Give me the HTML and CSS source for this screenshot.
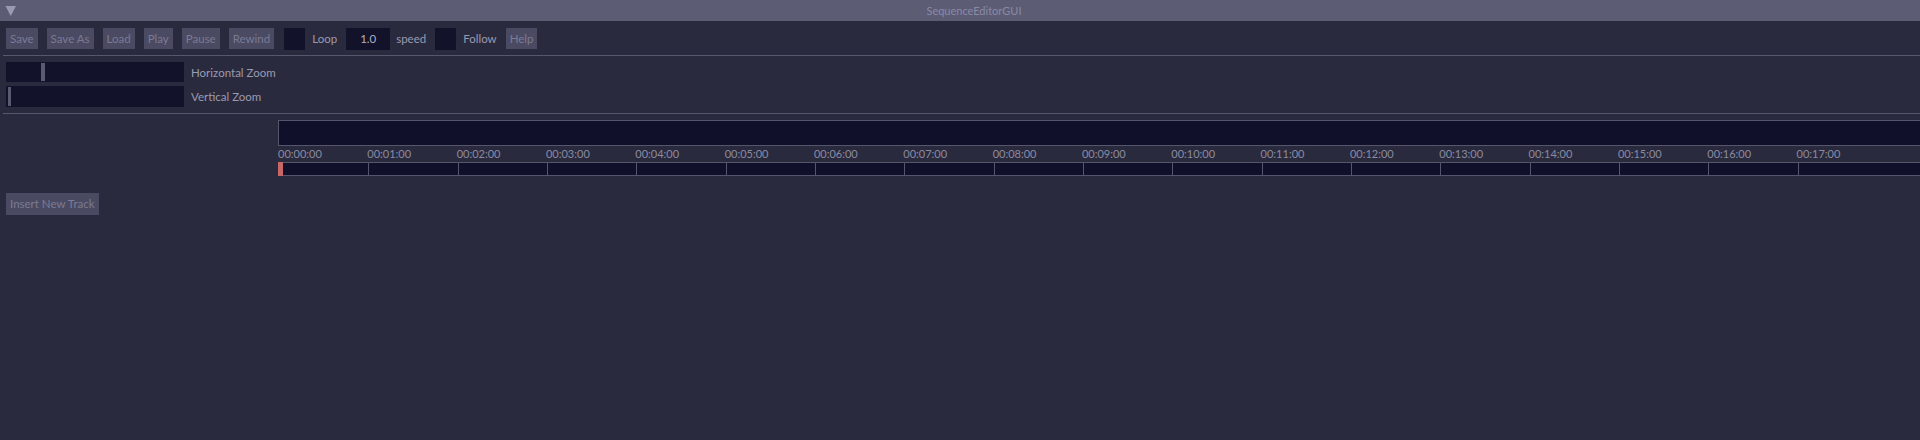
FILE: index.html
```html
<!DOCTYPE html>
<html>
<head>
<meta charset="utf-8">
<link rel="stylesheet" href="styles.css">
</head>
<body>
<div class="window">
  <div class="titlebar">
    <svg class="collapse" width="12" height="12" viewBox="0 0 12 12"><polygon points="0.5,1 11,1 5.75,11" fill="#9a9ab4"/></svg>
    <div class="title">SequenceEditorGUI</div>
    <div></div>
  </div>
  <div class="content">
    <div class="toolbar">
      <div class="btn">Save</div>
      <div class="btn">Save As</div>
      <div class="btn">Load</div>
      <div class="btn">Play</div>
      <div class="btn">Pause</div>
      <div class="btn">Rewind</div>
      <div class="check"></div>
      <div class="label">Loop</div>
      <div class="field">1.0</div>
      <div class="label">speed</div>
      <div class="check"></div>
      <div class="label">Follow</div>
      <div class="btn">Help</div>
    </div>
    <div class="sep"></div>
    <div class="sliders">
      <div class="slider-row">
        <div class="slider"><div class="grab" style="left:35px"></div></div>
        <div class="label">Horizontal Zoom</div>
      </div>
      <div class="slider-row">
        <div class="slider tall"><div class="grab thin" style="left:2px"></div></div>
        <div class="label">Vertical Zoom</div>
      </div>
    </div>
    <div class="sep"></div>
    <div class="timeline">
      <div class="track-box"></div>
      <div class="labels">
        <span>00:00:00</span><span>00:01:00</span><span>00:02:00</span><span>00:03:00</span><span>00:04:00</span><span>00:05:00</span><span>00:06:00</span><span>00:07:00</span><span>00:08:00</span><span>00:09:00</span><span>00:10:00</span><span>00:11:00</span><span>00:12:00</span><span>00:13:00</span><span>00:14:00</span><span>00:15:00</span><span>00:16:00</span><span>00:17:00</span>
      </div>
      <div class="ruler">
        <i></i><i></i><i></i><i></i><i></i><i></i><i></i><i></i><i></i><i></i><i></i><i></i><i></i><i></i><i></i><i></i><i></i><i></i>
        <div class="playhead"></div>
      </div>
    </div>
    <div class="btn insert">Insert New Track</div>
  </div>
</div>
</body>
</html>
```

FILE: styles.css
```css
html, body {
  margin: 0;
  padding: 0;
  background: #2a2a3e;
  overflow: hidden;
}
body {
  font-family: Lato, "Open Sans", sans-serif;
  font-size: 11.5px;
  color: #9a9ab0;
  width: 1920px;
  height: 440px;
}
.window {
  height: 440px;
  background: #2a2a3e;
}
.titlebar {
  height: 21px;
  background: #5c5c75;
  display: grid;
  grid-template-columns: 1fr auto 1fr;
  align-items: center;
}
.collapse {
  margin-left: 5px;
  margin-top: 1px;
}
.title {
  font-size: 11px;
  color: #8a8aa5;
  line-height: 21px;
  padding-left: 28px;
}
.content {
  padding: 6px 0 0 6px;
}
.toolbar {
  display: flex;
  align-items: center;
  height: 21px;
  margin-top: 1px;
}
.toolbar > * { margin-right: 9px; }
.btn {
  background: #4a4a62;
  color: #7b7b94;
  height: 21px;
  line-height: 21px;
  padding: 0 4px;
  box-sizing: border-box;
  white-space: nowrap;
}
.toolbar .btn:nth-child(5) { margin-right: 9px; }
.toolbar .btn:nth-child(6) { margin-right: 10px; }
.check {
  width: 21px;
  height: 22px;
  background: #12122a;
}
.toolbar .check { margin-right: 7px; }
.label {
  color: #9a9ab0;
  white-space: nowrap;
}
.toolbar .label { margin-right: 9px; }
.field {
  width: 44px;
  height: 22px;
  line-height: 22px;
  background: #12122a;
  color: #b0b0c4;
  text-align: center;
}
.toolbar .field { margin-right: 6px; }
.sep {
  height: 1px;
  background: #56566c;
  margin: 6px 0 6px -3px;
}
.sliders {
  display: flex;
  flex-direction: column;
  gap: 4px;
}
.slider-row {
  display: flex;
  align-items: center;
  gap: 7px;
}
.slider {
  position: relative;
  width: 178px;
  height: 20px;
  background: #12122a;
}
.slider.tall { height: 21px; }
.grab {
  position: absolute;
  top: 1px;
  bottom: 1px;
  width: 4px;
  background: #5a5a72;
}
.grab.thin { width: 3px; }
.timeline {
  margin-left: 272px;
}
.track-box {
  height: 26px;
  box-sizing: border-box;
  border: 1px solid #55556c;
  border-right: none;
  background: #10102a;
}
.labels {
  display: grid;
  grid-auto-flow: column;
  grid-auto-columns: 89.33px;
  height: 16px;
  line-height: 15px;
  font-size: 11px;
  color: #8a8aa0;
}
.labels span { white-space: nowrap; }
.ruler {
  position: relative;
  height: 14px;
  box-sizing: border-box;
  border-top: 1px solid #55556c;
  border-bottom: 1px solid #55556c;
  border-left: 1px solid #55556c;
  background: #10102a;
  display: grid;
  grid-auto-flow: column;
  grid-auto-columns: 89.33px;
}
.ruler i {
  border-left: 1px solid #55556c;
}
.playhead {
  position: absolute;
  left: -1px;
  top: -1px;
  bottom: -1px;
  width: 5px;
  background: #c86668;
}
.insert {
  display: inline-block;
  margin-top: 17px;
  height: 22px;
  line-height: 22px;
}
```
